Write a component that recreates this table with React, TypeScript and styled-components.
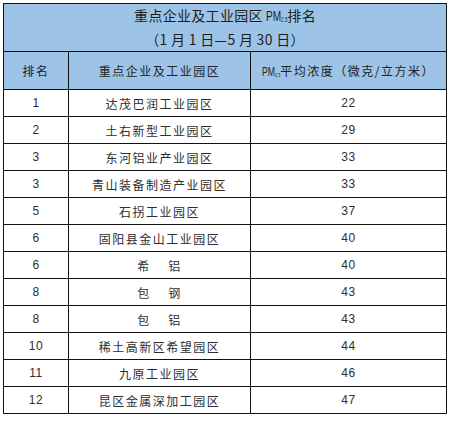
import React from 'react';
import styled, { createGlobalStyle } from 'styled-components';

const GlobalStyle = createGlobalStyle`
  html, body {
    margin: 0;
    padding: 0;
    background: #ffffff;
  }
  body {
    font-family: "Liberation Sans", "Noto Sans CJK SC", sans-serif;
    color: #2a2a2a;
  }
`;

const Page = styled.div`
  padding: 3px 0 0 3px;
`;

const Table = styled.table`
  border-collapse: collapse;
  width: 443px;
  table-layout: fixed;
`;

const TitleCell = styled.th`
  height: 47px;
  padding: 0;
  background: #9dc3e6;
  border: 1px solid #111;
  font-family: "Noto Sans CJK SC", sans-serif;
  font-weight: 400;
  font-size: 14px;
  line-height: 21px;
  color: #1e1e1e;
  text-align: center;
`;

const TitleLine = styled.div`
  letter-spacing: 0.3px;
`;

const HeadCell = styled.th`
  height: 37px;
  padding: 0;
  background: #9dc3e6;
  border: 1px solid #111;
  font-family: "Noto Sans CJK SC", sans-serif;
  font-weight: 400;
  font-size: 12px;
  color: #222;
  text-align: center;
  letter-spacing: 1.5px;
`;

const Cell = styled.td<{ $cjk?: boolean }>`
  height: 26px;
  padding: 0;
  border: 1px solid #111;
  text-align: center;
  font-family: ${({ $cjk }) =>
    $cjk ? '"Noto Sans CJK SC", sans-serif' : '"Liberation Sans", sans-serif'};
  font-size: 12px;
  letter-spacing: ${({ $cjk }) => ($cjk ? '1.5px' : '0.5px')};
  color: #2e2e2e;
`;

const Pm = styled.span<{ $size: number }>`
  font-family: "Liberation Sans", sans-serif;
  display: inline-block;
  transform: scaleX(0.72);
  transform-origin: left center;
  font-size: ${({ $size }) => $size}px;
  letter-spacing: 0;
  margin-right: ${({ $size }) => -$size * 0.62}px;
`;

const Sub = styled.sub`
  font-size: 0.45em;
  vertical-align: -0.1em;
`;

type Row = { rank: number; name: string; value: number };

const rows: Row[] = [
  { rank: 1, name: '达茂巴润工业园区', value: 22 },
  { rank: 2, name: '土右新型工业园区', value: 29 },
  { rank: 3, name: '东河铝业产业园区', value: 33 },
  { rank: 3, name: '青山装备制造产业园区', value: 33 },
  { rank: 5, name: '石拐工业园区', value: 37 },
  { rank: 6, name: '固阳县金山工业园区', value: 40 },
  { rank: 6, name: '希\u3000 铝', value: 40 },
  { rank: 8, name: '包\u3000 钢', value: 43 },
  { rank: 8, name: '包\u3000 铝', value: 43 },
  { rank: 10, name: '稀土高新区希望园区', value: 44 },
  { rank: 11, name: '九原工业园区', value: 46 },
  { rank: 12, name: '昆区金属深加工园区', value: 47 },
];

const App: React.FC = () => (
  <>
    <GlobalStyle />
    <Page>
      <Table>
        <colgroup>
          <col style={{ width: 65 }} />
          <col style={{ width: 182 }} />
          <col style={{ width: 196 }} />
        </colgroup>
        <thead>
          <tr>
            <TitleCell colSpan={3}>
              <TitleLine>
                重点企业及工业园区{' '}
                <Pm $size={14}>
                  PM<Sub>2.5</Sub>
                </Pm>
                排名
              </TitleLine>
              <TitleLine>（1 月 1 日—5 月 30 日）</TitleLine>
            </TitleCell>
          </tr>
          <tr>
            <HeadCell>排名</HeadCell>
            <HeadCell>重点企业及工业园区</HeadCell>
            <HeadCell>
              <Pm $size={12}>
                PM<Sub>2.5</Sub>
              </Pm>
              平均浓度（微克/立方米）
            </HeadCell>
          </tr>
        </thead>
        <tbody>
          {rows.map((r, i) => (
            <tr key={i}>
              <Cell>{r.rank}</Cell>
              <Cell $cjk>{r.name}</Cell>
              <Cell>{r.value}</Cell>
            </tr>
          ))}
        </tbody>
      </Table>
    </Page>
  </>
);

export default App;
